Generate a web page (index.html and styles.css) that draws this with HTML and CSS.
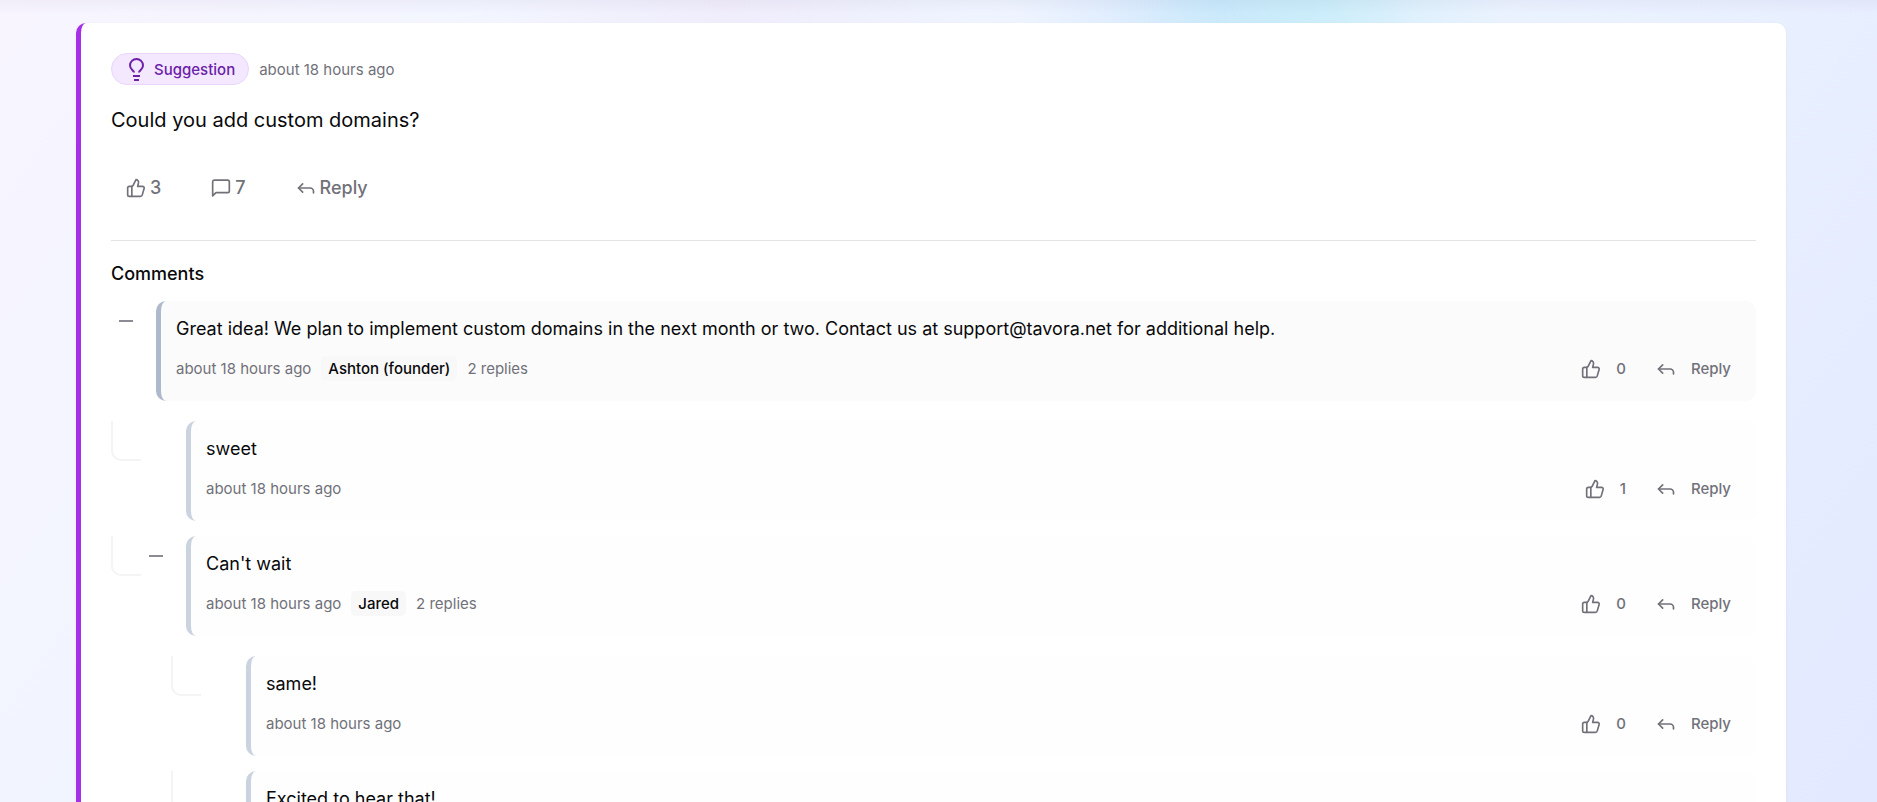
FILE: index.html
```html
<!DOCTYPE html>
<html lang="en">
<head>
<meta charset="UTF-8">
<meta name="viewport" content="width=device-width, initial-scale=1.0">
<title>Feedback</title>
<link rel="stylesheet" href="styles.css">
</head>
<body>

<svg class="sprite" aria-hidden="true">
  <symbol id="thumb" viewBox="0 0 24 24">
    <path d="M7 10v12"/>
    <path d="M15 5.88 14 10h5.83a2 2 0 0 1 1.92 2.56l-2.33 8A2 2 0 0 1 17.5 22H4a2 2 0 0 1-2-2v-8a2 2 0 0 1 2-2h2.76a2 2 0 0 0 1.79-1.11L12 2a3.13 3.13 0 0 1 3 3.88Z"/>
  </symbol>
  <symbol id="message" viewBox="0 0 24 24">
    <path d="M22 15.500a2 2 0 0 1-2 2H6l-4 4V4.500a2 2 0 0 1 2-2h16a2 2 0 0 1 2 2z"/>
  </symbol>
  <symbol id="reply" viewBox="0 0 24 24">
    <path d="M8 17l-5-5 5-5"/>
    <path d="M21 18v-2a4 4 0 0 0-4-4H3"/>
  </symbol>
  <symbol id="bulb" viewBox="0 0 20 24">
    <path d="M8 15.500C8 13.500 4 12.500 4 8.500a6.500 6.500 0 0 1 13 0C17 12.500 13 13.500 13 15.500"/>
    <path d="M7 19h7M8 23h5"/>
  </symbol>
</svg>

<main class="feedback">
  <header class="feedback-header">
    <span class="badge"><svg class="bulb"><use href="#bulb"/></svg>Suggestion</span>
    <span class="time">about 18 hours ago</span>
  </header>
  <p class="question">Could you add custom domains?</p>
  <div class="feedback-actions">
    <button type="button"><svg class="icon"><use href="#thumb"/></svg>3</button>
    <button type="button"><svg class="icon"><use href="#message"/></svg>7</button>
    <button type="button"><svg class="icon"><use href="#reply"/></svg>Reply</button>
  </div>

  <section class="comments">
    <h2>Comments</h2>

    <div class="comment">
      <button type="button" class="toggle" aria-label="Collapse replies"></button>
      <article class="box top">
        <p>Great idea! We plan to implement custom domains in the next month or two. Contact us at support@tavora.net for additional help.</p>
        <div class="meta">
          <span class="time">about 18 hours ago</span>
          <span class="author">Ashton (founder)</span>
          <span class="time">2 replies</span>
          <div class="actions">
            <button type="button"><svg class="icon"><use href="#thumb"/></svg>0</button>
            <button type="button"><svg class="icon"><use href="#reply"/></svg>Reply</button>
          </div>
        </div>
      </article>
    </div>

    <div class="replies">
      <div class="comment">
        <span class="toggle-space"></span>
        <article class="box">
          <p>sweet</p>
          <div class="meta">
            <span class="time">about 18 hours ago</span>
            <div class="actions">
              <button type="button"><svg class="icon"><use href="#thumb"/></svg>1</button>
              <button type="button"><svg class="icon"><use href="#reply"/></svg>Reply</button>
            </div>
          </div>
        </article>
      </div>

      <div class="comment">
        <button type="button" class="toggle" aria-label="Collapse replies"></button>
        <article class="box">
          <p>Can't wait</p>
          <div class="meta">
            <span class="time">about 18 hours ago</span>
            <span class="author">Jared</span>
            <span class="time">2 replies</span>
            <div class="actions">
              <button type="button"><svg class="icon"><use href="#thumb"/></svg>0</button>
              <button type="button"><svg class="icon"><use href="#reply"/></svg>Reply</button>
            </div>
          </div>
        </article>
      </div>

      <div class="replies">
        <div class="comment">
          <span class="toggle-space"></span>
          <article class="box">
            <p>same!</p>
            <div class="meta">
              <span class="time">about 18 hours ago</span>
              <div class="actions">
                <button type="button"><svg class="icon"><use href="#thumb"/></svg>0</button>
                <button type="button"><svg class="icon"><use href="#reply"/></svg>Reply</button>
              </div>
            </div>
          </article>
        </div>

        <div class="comment">
          <span class="toggle-space"></span>
          <article class="box">
            <p>Excited to hear that!</p>
            <div class="meta">
              <span class="time">about 18 hours ago</span>
              <div class="actions">
                <button type="button"><svg class="icon"><use href="#thumb"/></svg>0</button>
                <button type="button"><svg class="icon"><use href="#reply"/></svg>Reply</button>
              </div>
            </div>
          </article>
        </div>
      </div>
    </div>
  </section>
</main>

</body>
</html>
```
FILE: styles.css
```css
*, *::before {
  box-sizing: border-box;
}
html {
  scrollbar-width: none;
}
body {
  margin: 0;
  padding: 23px 91px 40px 76px;
  font-family: Inter, "Liberation Sans", sans-serif;
  font-size: 18px;
  line-height: 25px;
  color: #09090b;
  background:
    linear-gradient(rgba(90, 80, 130, 0.05), transparent 14px) no-repeat,
    radial-gradient(ellipse 200px 130px at 1310px 0, rgba(180, 238, 245, 0.5), transparent) no-repeat,
    radial-gradient(ellipse 200px 130px at 1220px 0, rgba(180, 218, 252, 0.5), transparent) no-repeat,
    radial-gradient(ellipse 240px 130px at 730px 0, rgba(240, 228, 248, 0.5), transparent) no-repeat,
    linear-gradient(125deg, #f8f5ff, #f1f5ff 25%, #ebf2ff 60%, #e2e8ff);
}
p, h2 {
  margin: 0;
}
button {
  display: flex;
  align-items: center;
  border: none;
  background: none;
  color: #71717a;
  font-family: inherit;
  font-weight: 500;
  cursor: pointer;
}
.sprite {
  position: absolute;
  width: 0;
  height: 0;
}
.icon, .bulb {
  width: 20px;
  height: 20px;
  fill: none;
  stroke: currentColor;
  stroke-width: 2;
  stroke-linecap: round;
  stroke-linejoin: round;
}
.feedback {
  padding: 30px;
  border-left: 5px solid #a62fe8;
  border-radius: 10px;
  background: #fff;
  box-shadow: 0 1px 3px rgba(0, 0, 0, 0.06);
}
.feedback-header {
  display: flex;
  align-items: center;
  gap: 10px;
}
.badge {
  display: flex;
  align-items: center;
  gap: 8px;
  height: 32px;
  padding: 0 13px 0 14px;
  border: 1px solid #e9d5ff;
  border-radius: 16px;
  background: #f3e8ff;
  color: #6b21a8;
  font-size: 15px;
  font-weight: 500;
}
.bulb {
  height: 24px;
  stroke-linecap: butt;
}
.time {
  color: #71717a;
  font-size: 15px;
}
.question {
  margin-top: 20px;
  font-size: 20px;
  line-height: 30px;
}
.feedback-actions {
  display: flex;
  gap: 20px;
  margin: 30px 0;
}
.feedback-actions button {
  gap: 4px;
  height: 45px;
  padding: 0 15px;
  font-size: 18px;
}
.comments {
  padding-top: 20px;
  border-top: 1px solid #e4e4e7;
}
.comments h2 {
  margin-bottom: 15px;
  font-size: 18px;
  font-weight: 500;
}
.comment {
  display: flex;
  align-items: flex-start;
  gap: 15px;
  position: relative;
}
.toggle, .toggle-space {
  flex: none;
  width: 30px;
  height: 40px;
}
.toggle {
  justify-content: center;
  padding: 0;
}
.toggle::before {
  content: "";
  width: 14px;
  height: 2px;
  background: #8b8b93;
}
.box {
  flex: 1;
  padding: 15px;
  border-left: 5px solid #cbd3e1;
  border-radius: 10px;
  background: #fefefe;
}
.box.top {
  border-left-color: #afb9cc;
  background: #fbfbfb;
}
.meta {
  display: flex;
  align-items: center;
  gap: 10px;
  height: 35px;
  margin-top: 10px;
}
.author {
  padding: 0 7px;
  border-radius: 5px;
  background: #f8f8f8;
  font-size: 15px;
  font-weight: 500;
}
.actions {
  display: flex;
  gap: 10px;
  margin-left: auto;
}
.actions button {
  gap: 15px;
  height: 35px;
  padding: 0 10px;
  font-size: 15px;
}
.replies {
  display: flex;
  flex-direction: column;
  gap: 15px;
  margin: 20px 0 0 30px;
}
.replies .replies {
  margin: 5px 0 0 60px;
}
/* elbow that ties a reply to its parent */
.replies .comment::before {
  content: "";
  position: absolute;
  top: 0;
  left: -30px;
  width: 30px;
  height: 40px;
  border-left: 2px solid #f4f4f5;
  border-bottom: 2px solid #f4f4f5;
  border-bottom-left-radius: 10px;
}
```
